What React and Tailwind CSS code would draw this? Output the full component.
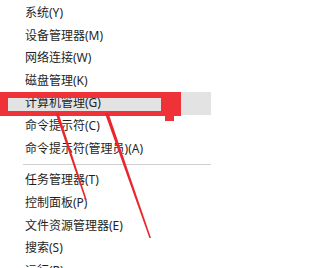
import React from 'react'

const topItems = ['系统(Y)', '设备管理器(M)', '网络连接(W)', '磁盘管理(K)', '计算机管理(G)', '命令提示符(C)', '命令提示符(管理员)(A)']
const bottomItems = ['任务管理器(T)', '控制面板(P)', '文件资源管理器(E)', '搜索(S)', '运行(R)']

const Row = ({ label, active, tall }) => <div className={`flex items-center pl-[25px] ${tall ? 'h-[22.8px]' : 'h-[22.6px]'} ${active ? 'bg-[#e3e3e3]' : ''}`}>
	<span className="whitespace-nowrap">{label}</span>
</div>

const App = () => {
	return <div className="relative w-[211px] h-[268px] overflow-hidden bg-white text-[12px] leading-none text-[#1f1f1f]" style={{ fontFamily: '"Noto Sans", "Noto Sans CJK SC", sans-serif' }}>
		<div className="flex flex-col pt-[1.7px]">
			{topItems.map((t, i) => <Row key={t} label={t} active={i === 4} />)}
			<div className="flex items-center h-[8.8px]">
				<div className="ml-[23px] flex-1 h-px bg-[#cfcfcf]" />
			</div>
			{bottomItems.map(t => <Row key={t} label={t} tall />)}
		</div>
		{/* red annotation */}
		<div className="absolute left-0 top-[92px] w-[181px] h-[24px] border-[#ee3237] border-t-[6px] border-l-[8px] border-b-[5px] border-r-[20px]" />
		<div className="absolute left-[165px] top-[115px] w-[9px] h-[6px] bg-[#ee3237]" />
		<svg className="absolute inset-0" width="211" height="268" viewBox="0 0 211 268">
			<polygon points="55.5,113 58.5,113 86.8,200 85.2,200" fill="#e8262b" />
			<polygon points="104.8,113 108.4,113 151,238 149.4,238" fill="#e8262b" />
		</svg>
	</div>
}

export default App
